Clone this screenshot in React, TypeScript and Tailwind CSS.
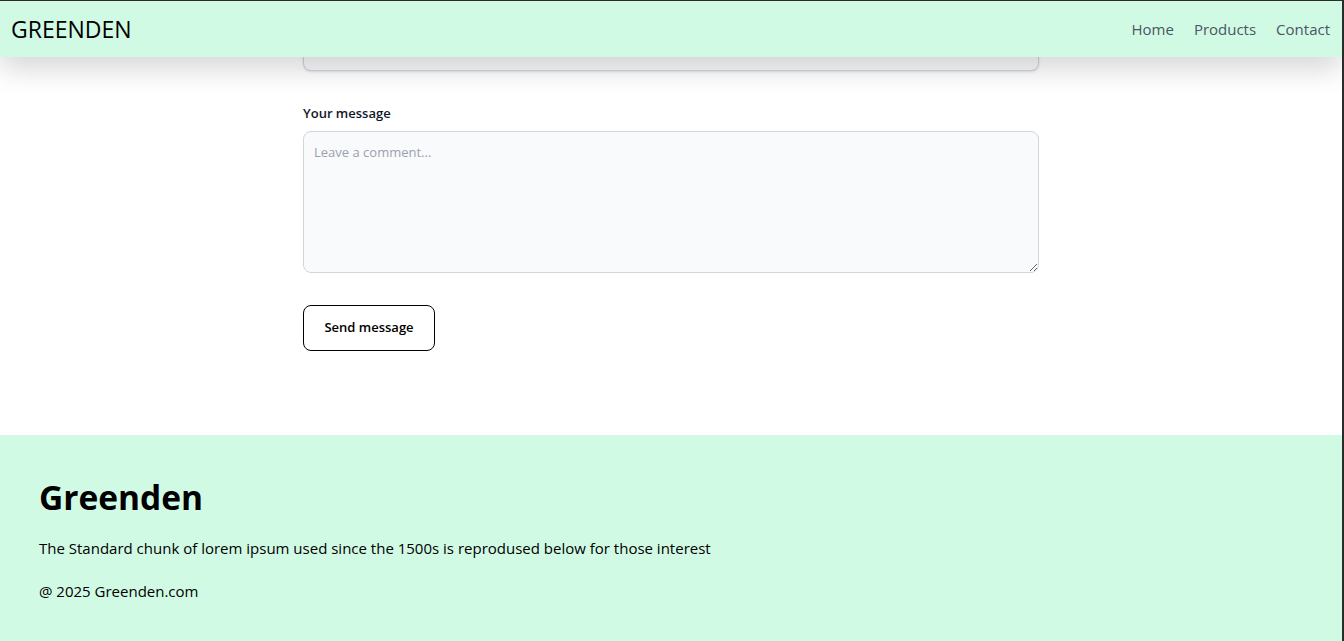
import React from "react";

export default function App() {
  return (
    <div className="relative h-[641px] overflow-hidden border-t border-r-2 border-[#2b2b2b] bg-white font-['Open_Sans',sans-serif]">
      <header className="absolute inset-x-0 top-0 z-10 flex h-[56px] items-center justify-between bg-[#d1fae5] pl-[11px] pr-[12px] shadow-[0_12px_28px_rgba(0,0,0,0.16)]">
        <div className="text-[23px] leading-8 text-black">GREENDEN</div>
        <nav className="flex items-center gap-[20px] text-[15px] leading-6 text-[#4b5563]">
          <a href="#">Home</a>
          <a href="#">Products</a>
          <a href="#">Contact</a>
        </nav>
      </header>

      <main className="mx-auto mt-[28px] w-[736px] pb-[84px]">
        <form className="flex flex-col gap-8">
          <input
            type="text"
            className="block h-[42px] w-full rounded-lg border border-gray-300 bg-gray-50 px-2.5 text-[13px] shadow-sm"
          />
          <div>
            <label className="mb-2 block text-[13px] font-semibold leading-5 text-gray-900">Your message</label>
            <textarea
              rows={6}
              placeholder="Leave a comment..."
              className="block h-[142px] w-full rounded-lg border border-gray-300 bg-gray-50 p-2.5 text-[13px] leading-5 text-gray-900 placeholder:text-gray-400"
            />
          </div>
          <div>
            <button
              type="button"
              className="h-[46px] w-[132px] rounded-lg border border-black bg-white text-[13px] font-semibold text-black"
            >
              Send message
            </button>
          </div>
        </form>
      </main>

      <footer className="bg-[#d1fae5] px-[39px] pb-10 pt-[42px] text-black">
        <h2 className="text-[33.5px] font-bold leading-10">Greenden</h2>
        <p className="mt-[19px] text-[15px] leading-6">
          The Standard chunk of lorem ipsum used since the 1500s is reprodused below for those interest
        </p>
        <p className="mt-[19px] text-[15px] leading-6">@ 2025 Greenden.com</p>
      </footer>
    </div>
  );
}
